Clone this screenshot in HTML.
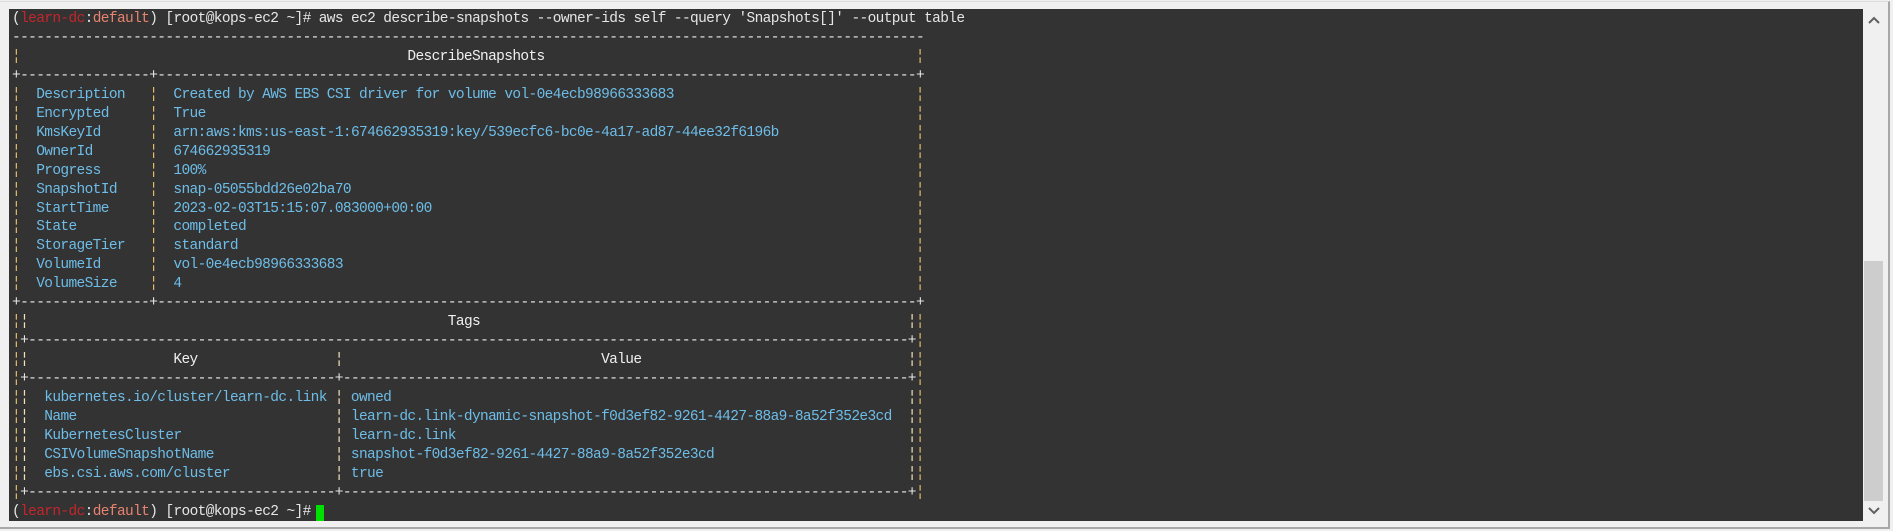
<!DOCTYPE html>
<html><head><meta charset="utf-8"><style>
html,body{margin:0;padding:0;}
body{width:1893px;height:531px;background:#f0f0f0;position:relative;overflow:hidden;font-family:"Liberation Mono",monospace;font-size:14.5px;letter-spacing:-0.63px;}
#frame{position:absolute;left:0;top:1px;width:1890px;height:528px;border-top:1px solid #dcdcdc;border-right:2px solid #a8a8a8;border-bottom:2px solid #a8a8a8;box-sizing:border-box;}
#term{position:absolute;left:9px;top:9px;width:1854px;height:512px;background:#333333;}
#sb{position:absolute;left:1864px;top:9px;width:19px;height:512px;background:#f0f0f0;}
#thumb{position:absolute;left:1864px;top:261px;width:19px;height:240px;background:#cdcdcd;}
.l{position:absolute;left:0;height:19px;line-height:19px;white-space:pre;}
.l span{position:absolute;top:0;white-space:pre;}
.d{overflow:hidden;color:#e6e6e6;}
.o{color:#e3bd6a;}
.i{color:#f2e2b8;}
.b{color:#6dbde8;}
.h{color:#f0f0f0;}
.w{color:#e6e6e6;}
.r{color:#c3262c;}
.s{color:#e8836f;}
#cur{position:absolute;left:316px;top:505px;width:8px;height:16px;background:#00e000;}
</style></head><body>
<div id="frame"></div>
<div id="term"></div>
<div id="sb"></div>
<div id="thumb"></div>
<svg style="position:absolute;left:1866px;top:14px" width="16" height="12"><path d="M3 9 L8 4 L13 9" stroke="#606060" stroke-width="2" fill="none"/></svg>
<svg style="position:absolute;left:1866px;top:505px" width="16" height="12"><path d="M3 3 L8 8 L13 3" stroke="#606060" stroke-width="2" fill="none"/></svg>

<div class="l" style="top:10px;left:12px"><span class="w" style="left:0;position:static">(</span><span class="r" style="position:static">learn-dc</span><span class="w" style="position:static">:</span><span class="s" style="position:static">default</span><span class="w" style="position:static">) [root@kops-ec2 ~]# aws ec2 describe-snapshots --owner-ids self --query 'Snapshots[]' --output table</span></div>

<div class="l" style="top:29px"><span class="d" style="left:12px;width:912px">-------------------------------------------------------------------------------------------------------------------------</span></div>
<div class="l" style="top:48px"><span class="o" style="left:12px">¦</span><span class="h" style="left:407.4px">DescribeSnapshots</span><span class="o" style="left:915.8px">¦</span></div>
<div class="l" style="top:67px"><span class="d" style="left:12px;width:912px">+----------------+----------------------------------------------------------------------------------------------+</span></div>

<div class="l" style="top:86px"><span class="o" style="left:12px">¦</span><span class="b" style="left:36.2px">Description</span><span class="o" style="left:149.2px">¦</span><span class="b" style="left:173.4px">Created by AWS EBS CSI driver for volume vol-0e4ecb98966333683</span><span class="o" style="left:915.8px">¦</span></div>
<div class="l" style="top:105px"><span class="o" style="left:12px">¦</span><span class="b" style="left:36.2px">Encrypted</span><span class="o" style="left:149.2px">¦</span><span class="b" style="left:173.4px">True</span><span class="o" style="left:915.8px">¦</span></div>
<div class="l" style="top:124px"><span class="o" style="left:12px">¦</span><span class="b" style="left:36.2px">KmsKeyId</span><span class="o" style="left:149.2px">¦</span><span class="b" style="left:173.4px">arn:aws:kms:us-east-1:674662935319:key/539ecfc6-bc0e-4a17-ad87-44ee32f6196b</span><span class="o" style="left:915.8px">¦</span></div>
<div class="l" style="top:143px"><span class="o" style="left:12px">¦</span><span class="b" style="left:36.2px">OwnerId</span><span class="o" style="left:149.2px">¦</span><span class="b" style="left:173.4px">674662935319</span><span class="o" style="left:915.8px">¦</span></div>
<div class="l" style="top:162px"><span class="o" style="left:12px">¦</span><span class="b" style="left:36.2px">Progress</span><span class="o" style="left:149.2px">¦</span><span class="b" style="left:173.4px">100%</span><span class="o" style="left:915.8px">¦</span></div>
<div class="l" style="top:181px"><span class="o" style="left:12px">¦</span><span class="b" style="left:36.2px">SnapshotId</span><span class="o" style="left:149.2px">¦</span><span class="b" style="left:173.4px">snap-05055bdd26e02ba70</span><span class="o" style="left:915.8px">¦</span></div>
<div class="l" style="top:200px"><span class="o" style="left:12px">¦</span><span class="b" style="left:36.2px">StartTime</span><span class="o" style="left:149.2px">¦</span><span class="b" style="left:173.4px">2023-02-03T15:15:07.083000+00:00</span><span class="o" style="left:915.8px">¦</span></div>
<div class="l" style="top:218px"><span class="o" style="left:12px">¦</span><span class="b" style="left:36.2px">State</span><span class="o" style="left:149.2px">¦</span><span class="b" style="left:173.4px">completed</span><span class="o" style="left:915.8px">¦</span></div>
<div class="l" style="top:237px"><span class="o" style="left:12px">¦</span><span class="b" style="left:36.2px">StorageTier</span><span class="o" style="left:149.2px">¦</span><span class="b" style="left:173.4px">standard</span><span class="o" style="left:915.8px">¦</span></div>
<div class="l" style="top:256px"><span class="o" style="left:12px">¦</span><span class="b" style="left:36.2px">VolumeId</span><span class="o" style="left:149.2px">¦</span><span class="b" style="left:173.4px">vol-0e4ecb98966333683</span><span class="o" style="left:915.8px">¦</span></div>
<div class="l" style="top:275px"><span class="o" style="left:12px">¦</span><span class="b" style="left:36.2px">VolumeSize</span><span class="o" style="left:149.2px">¦</span><span class="b" style="left:173.4px">4</span><span class="o" style="left:915.8px">¦</span></div>
<div class="l" style="top:294px"><span class="d" style="left:12px;width:912px">+----------------+----------------------------------------------------------------------------------------------+</span></div>
<div class="l" style="top:313px"><span class="o" style="left:12px">¦</span><span class="i" style="left:20.07px">¦</span><span class="h" style="left:447.8px">Tags</span><span class="i" style="left:907.8px">¦</span><span class="o" style="left:915.8px">¦</span></div>
<div class="l" style="top:332px"><span class="o" style="left:12px">¦</span><span class="d" style="left:20.07px;width:887.7px">+-----------------------------------------------------------------------------------------------------------------------</span><span class="d" style="left:907.8px">+</span><span class="o" style="left:915.8px">¦</span></div>
<div class="l" style="top:351px"><span class="o" style="left:12px">¦</span><span class="i" style="left:20.07px">¦</span><span class="h" style="left:173.4px">Key</span><span class="i" style="left:334.8px">¦</span><span class="h" style="left:601.1px">Value</span><span class="i" style="left:907.8px">¦</span><span class="o" style="left:915.8px">¦</span></div>
<div class="l" style="top:370px"><span class="o" style="left:12px">¦</span><span class="d" style="left:20.07px;width:314.7px">+-------------------------------------------------</span><span class="d" style="left:334.8px;width:573px">+-----------------------------------------------------------------------------------</span><span class="d" style="left:907.8px">+</span><span class="o" style="left:915.8px">¦</span></div>

<div class="l" style="top:389px"><span class="o" style="left:12px">¦</span><span class="i" style="left:20.07px">¦</span><span class="b" style="left:44.3px">kubernetes.io/cluster/learn-dc.link</span><span class="i" style="left:334.8px">¦</span><span class="b" style="left:350.9px">owned</span><span class="i" style="left:907.8px">¦</span><span class="o" style="left:915.8px">¦</span></div>
<div class="l" style="top:408px"><span class="o" style="left:12px">¦</span><span class="i" style="left:20.07px">¦</span><span class="b" style="left:44.3px">Name</span><span class="i" style="left:334.8px">¦</span><span class="b" style="left:350.9px">learn-dc.link-dynamic-snapshot-f0d3ef82-9261-4427-88a9-8a52f352e3cd</span><span class="i" style="left:907.8px">¦</span><span class="o" style="left:915.8px">¦</span></div>
<div class="l" style="top:427px"><span class="o" style="left:12px">¦</span><span class="i" style="left:20.07px">¦</span><span class="b" style="left:44.3px">KubernetesCluster</span><span class="i" style="left:334.8px">¦</span><span class="b" style="left:350.9px">learn-dc.link</span><span class="i" style="left:907.8px">¦</span><span class="o" style="left:915.8px">¦</span></div>
<div class="l" style="top:446px"><span class="o" style="left:12px">¦</span><span class="i" style="left:20.07px">¦</span><span class="b" style="left:44.3px">CSIVolumeSnapshotName</span><span class="i" style="left:334.8px">¦</span><span class="b" style="left:350.9px">snapshot-f0d3ef82-9261-4427-88a9-8a52f352e3cd</span><span class="i" style="left:907.8px">¦</span><span class="o" style="left:915.8px">¦</span></div>
<div class="l" style="top:465px"><span class="o" style="left:12px">¦</span><span class="i" style="left:20.07px">¦</span><span class="b" style="left:44.3px">ebs.csi.aws.com/cluster</span><span class="i" style="left:334.8px">¦</span><span class="b" style="left:350.9px">true</span><span class="i" style="left:907.8px">¦</span><span class="o" style="left:915.8px">¦</span></div>
<div class="l" style="top:484px"><span class="o" style="left:12px">¦</span><span class="d" style="left:20.07px;width:314.7px">+-------------------------------------------------</span><span class="d" style="left:334.8px;width:573px">+-----------------------------------------------------------------------------------</span><span class="d" style="left:907.8px">+</span><span class="o" style="left:915.8px">¦</span></div>

<div class="l" style="top:503px;left:12px"><span class="w" style="position:static">(</span><span class="r" style="position:static">learn-dc</span><span class="w" style="position:static">:</span><span class="s" style="position:static">default</span><span class="w" style="position:static">) [root@kops-ec2 ~]# </span></div>
<div id="cur"></div>
</body></html>
